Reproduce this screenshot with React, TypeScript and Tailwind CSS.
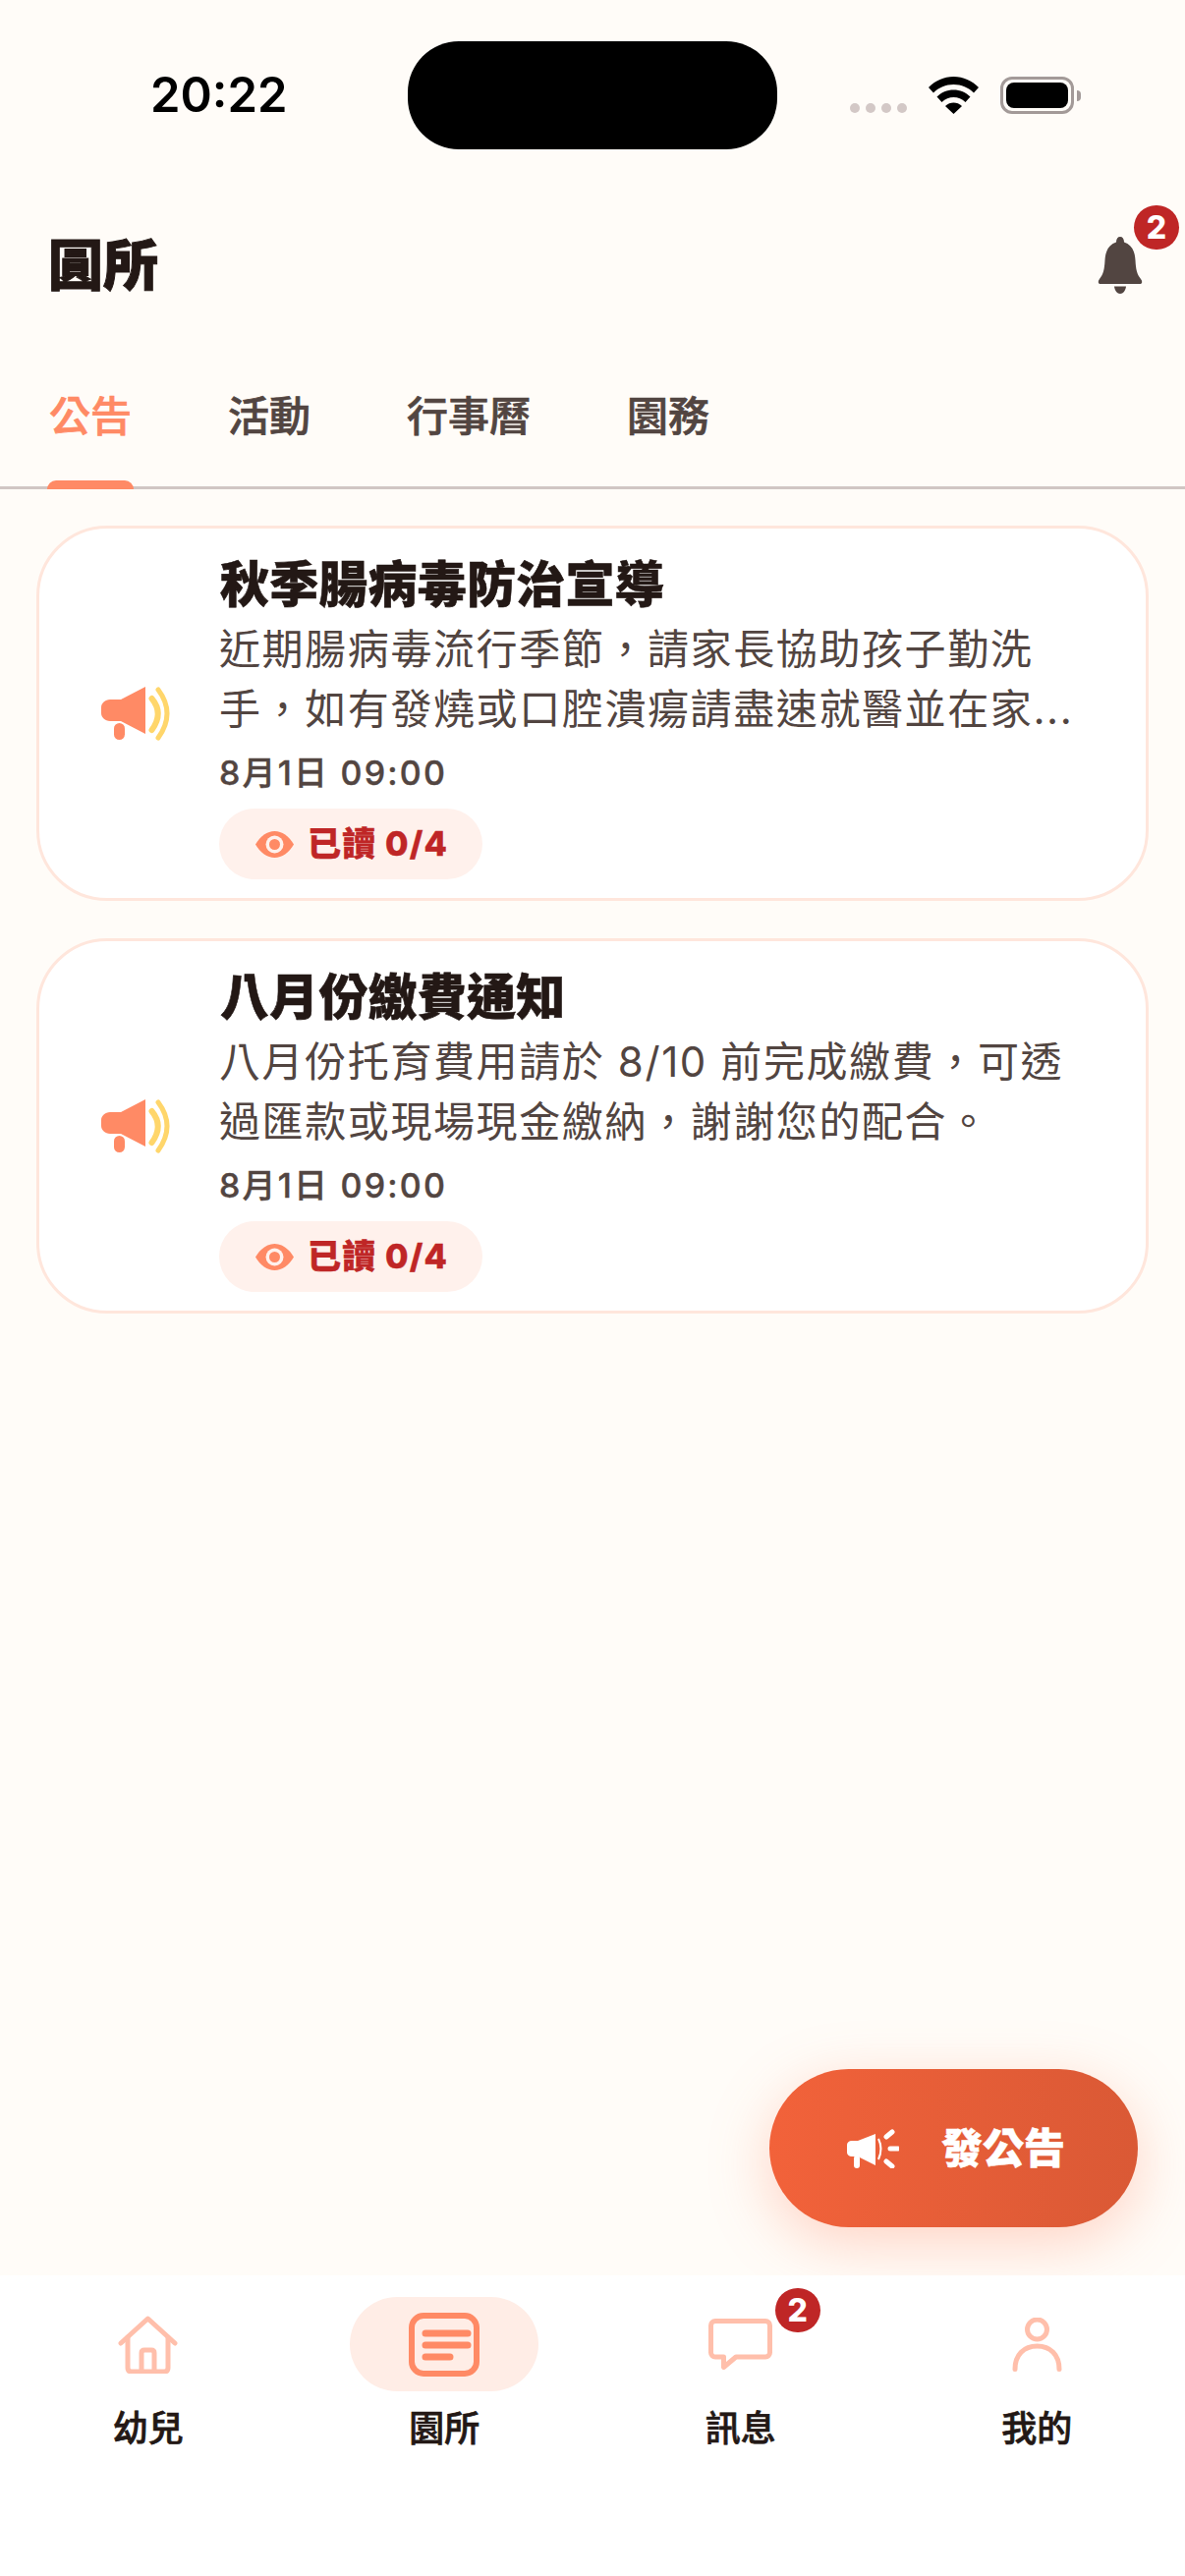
const FONT = "font-['Inter','Noto_Sans_CJK_TC',sans-serif]";

function Megaphone() {
  return (
    <svg width="70" height="56" viewBox="0 0 70 56" className="mb-[6px] shrink-0">
      <path d="M9 13H20L45 0V48L20 35H9C4 35 0 31 0 27V21C0 17 4 13 9 13Z" fill="#ff8a65" />
      <rect x="13" y="37" width="11" height="17" rx="5.5" fill="#ff8a65" />
      <path d="M51.5 12Q64 27 51.5 44" fill="none" stroke="#ffd66b" strokeWidth="6" strokeLinecap="round" />
      <path d="M58 3Q76 27 58 52" fill="none" stroke="#ffd66b" strokeWidth="5" strokeLinecap="round" />
    </svg>
  );
}

function Eye() {
  return (
    <svg width="39" height="27" viewBox="0 0 39 27" className="shrink-0">
      <path d="M0 13.5C5 5 12 0 19.5 0S34 5 39 13.5C34 22 27 27 19.5 27S5 22 0 13.5Z" fill="#ff8a65" />
      <circle cx="19.5" cy="13.5" r="9" fill="#fff1ec" />
      <circle cx="19.5" cy="13.5" r="5.5" fill="#ff8a65" />
    </svg>
  );
}

function Badge({ className }: { className: string }) {
  return (
    <span className={`absolute flex h-[45px] w-[46px] items-center justify-center rounded-full bg-[#bf2626] text-[32px] leading-none font-extrabold text-white ${className}`}>
      2
    </span>
  );
}

function Card({ title, body }: { title: string; body: string }) {
  return (
    <div className="flex items-center rounded-[72px] border-[3px] border-[#ffe6dc] bg-white pt-[27px] pb-[19px] pl-[63px]">
      <Megaphone />
      <div className="ml-[50px] flex w-[870px] flex-col">
        <div className="pl-[1px] text-[50px] leading-[60px] font-black tracking-[0.2px] text-[#231815] [-webkit-text-stroke:0.6px_#231815]">{title}</div>
        <div className="mt-[5px] text-[42px] leading-[61px] tracking-[1.6px] text-[#524541]">{body}</div>
        <div className="mt-[15px] text-[34px] leading-[40px] font-medium tracking-[2.2px] text-[#524541] [-webkit-text-stroke:0.4px_#524541]">8月1日 09:00</div>
        <div className="mt-[16px] flex h-[72px] w-[268px] items-center rounded-full bg-[#fff1ec] pl-[37px]">
          <Eye />
          <span className="ml-[14px] text-[34px] leading-none font-extrabold tracking-[1.2px] text-[#bf2626] [-webkit-text-stroke:0.4px_#bf2626]">已讀 0/4</span>
        </div>
      </div>
    </div>
  );
}

function Tab({ label, active }: { label: string; active?: boolean }) {
  return (
    <div className={`relative pt-[54px] text-[42px] leading-[60px] font-medium ${active ? "text-[#ff8a65] [-webkit-text-stroke:0.7px_#ff8a65]" : "text-[#524541] [-webkit-text-stroke:0.7px_#524541]"}`}>
      {label}
      {active && <span className="absolute -left-[2px] -right-[2px] -bottom-[3px] h-[9px] rounded-t-[10px] bg-[#ff8a65]" />}
    </div>
  );
}

function NavItem({ label, children, active }: { label: string; children: React.ReactNode; active?: boolean }) {
  return (
    <div className="flex flex-1 flex-col items-center pt-[22px]">
      <div className={`relative flex h-[96px] w-[192px] items-center justify-center rounded-full ${active ? "bg-[#ffede6]" : ""}`}>{children}</div>
      <div className="mt-[16px] text-[36px] leading-[44px] font-medium text-[#231815] [-webkit-text-stroke:0.7px_#231815]">{label}</div>
    </div>
  );
}

export default function App() {
  return (
    <div className={`${FONT} relative flex h-[2622px] w-[1206px] flex-col overflow-hidden bg-[#fffcf8]`}>
      <div className="relative flex h-[200px] shrink-0 items-start justify-between pr-[106px] pl-[153px]">
        <span className="mt-[67px] text-[49px] leading-[60px] font-semibold text-black">20:22</span>
        <span className="absolute top-[42px] left-[415px] h-[110px] w-[376px] rounded-[52px] bg-black" />
        <div className="mt-[78px] flex items-end">
          <div className="mb-[1px] flex gap-[6px]">
            <span className="h-[10px] w-[10px] rounded-full bg-[#d3c8c6]" />
            <span className="h-[10px] w-[10px] rounded-full bg-[#d3c8c6]" />
            <span className="h-[10px] w-[10px] rounded-full bg-[#d3c8c6]" />
            <span className="h-[10px] w-[10px] rounded-full bg-[#d3c8c6]" />
          </div>
          <svg width="51" height="38" viewBox="0 0 51 38" className="ml-[22px]">
            <path d="M25.5 0C15.5 0 7 4 0 11L5 16.5C10.5 11 17.5 8 25.5 8S40.5 11 46 16.5L51 11C44 4 35.5 0 25.5 0Z" fill="#000" />
            <path d="M25.5 13.5C19 13.5 13 16 8.500 20.500L13.500 26C17 22.500 21 21 25.500 21S34 22.500 37.500 26L42.500 20.500C38 16 32 13.500 25.500 13.500Z" fill="#000" />
            <path d="M25.500 26.500C22.500 26.500 19.500 27.500 17 30L25.500 38L34 30C31.500 27.500 28.500 26.500 25.500 26.500Z" fill="#000" />
          </svg>
          <div className="ml-[22px] flex items-center">
            <div className="flex h-[38px] w-[75px] items-center justify-center rounded-[12px] border-[3px] border-[#a39a98] p-[3px]">
              <span className="h-full w-full rounded-[8px] bg-black" />
            </div>
            <span className="ml-[3px] h-[11px] w-[4px] rounded-r-full bg-[#a39a98]" />
          </div>
        </div>
      </div>

      <div className="flex h-[140px] shrink-0 items-center justify-between pr-[43px] pl-[49px]">
        <span className="text-[56px] leading-none font-black text-[#231815] [-webkit-text-stroke:1px_#231815]">圓所</span>
        <div className="relative h-[58px] w-[46px]">
          <svg width="46" height="58" viewBox="0 0 46 58">
            <path d="M23 0C25.500 0 27 2 27 5.500C35 8 38 15 38.500 24C39 33 40 38 44 43C46 45.500 45.500 48 43 48H3C0.500 48 0 45.500 2 43C6 38 7 33 7.500 24C8 15 11 8 19 5.500C19 2 20.500 0 23 0Z" fill="#524541" />
            <path d="M17 50.500H29C28.500 55 26 58 23 58S17.500 55 17 50.500Z" fill="#524541" />
          </svg>
          <Badge className="-top-[32px] left-[37px]" />
        </div>
      </div>

      <div className="flex h-[158px] shrink-0 gap-[98px] border-b-[3px] border-[#d0c6c4] pl-[50px]">
        <Tab label="公告" active />
        <Tab label="活動" />
        <Tab label="行事曆" />
        <Tab label="園務" />
      </div>

      <div className="flex flex-1 flex-col gap-[38px] px-[37px] pt-[37px]">
        <Card title="秋季腸病毒防治宣導" body="近期腸病毒流行季節，請家長協助孩子勤洗手，如有發燒或口腔潰瘍請盡速就醫並在家..." />
        <Card title="八月份繳費通知" body="八月份托育費用請於 8/10 前完成繳費，可透過匯款或現場現金繳納，謝謝您的配合。" />
      </div>

      <div className="absolute right-[48px] bottom-[355px] flex h-[161px] w-[375px] items-center rounded-full bg-gradient-to-r from-[#f2623a] to-[#da5935] pl-[78px] shadow-[0_16px_60px_rgba(255,138,101,0.35)]">
        <svg width="54" height="40" viewBox="0 0 54 40" className="shrink-0">
          <path d="M6 12H12L30 5V37L12 28H6C3 28 1 26 1 24V16C1 14 3 12 6 12Z" fill="#fff" />
          <rect x="8" y="27" width="6" height="13" rx="3" fill="#fff" />
          <path d="M33 10Q38 20 33 31" fill="none" stroke="#fff" strokeWidth="2" />
          <path d="M41 8L47 3M45 20H53M41 33L47 38" fill="none" stroke="#fff" strokeWidth="5" strokeLinecap="round" />
        </svg>
        <span className="ml-[43px] text-[42px] leading-none font-extrabold text-white [-webkit-text-stroke:0.5px_#ffffff]">發公告</span>
      </div>

      <div className="relative flex h-[306px] shrink-0 bg-white">
        <NavItem label="幼兒">
          <svg width="61" height="59" viewBox="0 0 61 59" fill="none" stroke="#ffbfab" strokeWidth="5" strokeLinecap="round" strokeLinejoin="round">
            <path d="M3 28L30.500 3L58 28" />
            <path d="M10 22V53Q10 57 14 57H47Q51 57 51 53V22" />
            <path d="M24 57V38Q24 35 27 35H34Q37 35 37 38V57" />
          </svg>
        </NavItem>
        <NavItem label="園所" active>
          <svg width="72" height="65" viewBox="0 0 72 65" fill="none" stroke="#ff8a65" strokeLinecap="round">
            <rect x="3" y="3" width="66" height="59" rx="12" strokeWidth="6" />
            <path d="M17 21H60M17 33H60M17 45H42" strokeWidth="7" />
          </svg>
        </NavItem>
        <NavItem label="訊息">
          <svg width="65" height="52" viewBox="0 0 65 52" fill="none" stroke="#ffbfab" strokeWidth="5" strokeLinecap="round" strokeLinejoin="round">
            <path d="M7 2.500H58A4.500 4.500 0 0 1 62.500 7V34.500A4.500 4.500 0 0 1 58 39H28L15.500 49.500V39H7A4.500 4.500 0 0 1 2.500 34.500V7A4.500 4.500 0 0 1 7 2.500Z" />
          </svg>
          <Badge className="-top-[9px] left-[131px]" />
        </NavItem>
        <NavItem label="我的">
          <svg width="51" height="55" viewBox="0 0 51 55" fill="none" stroke="#ffbfab" strokeWidth="5" strokeLinecap="round">
            <circle cx="25.500" cy="12" r="10" />
            <path d="M3 52.500C3 38 12 29 25.500 29C39 29 48 38 48 52.500" />
          </svg>
        </NavItem>
      </div>
    </div>
  );
}
